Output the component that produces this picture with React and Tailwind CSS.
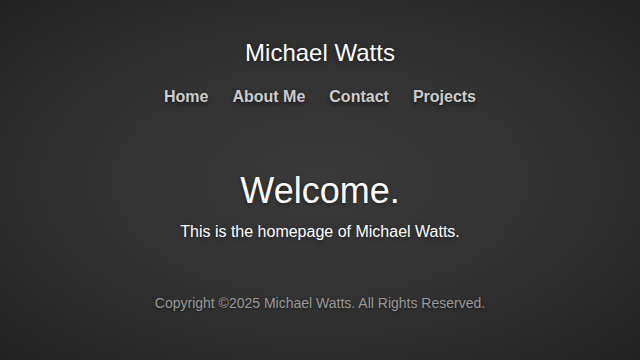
import React from 'react';

const links = ['Home', 'About Me', 'Contact', 'Projects'];

const App = () => {
  return (
    <div
      className="w-full h-[360px] flex flex-col items-center text-center bg-[radial-gradient(ellipse_at_center,#3a3a3a_0%,#333_45%,#222_100%)]"
      style={{ fontFamily: '"Liberation Sans", Arial, sans-serif' }}
    >
      <header className="pt-[38px] flex flex-col items-center">
        <h1 className="text-[24px] leading-[30px] text-white [text-shadow:0_1px_4px_rgba(0,0,0,0.5)]">Michael Watts</h1>
        <nav className="mt-[17px] flex gap-6">
          {links.map((link) => (
            <a
              key={link}
              href="#"
              className="text-[16px] leading-[24px] font-bold text-[#cccccc] [text-shadow:0_2px_4px_rgba(0,0,0,0.6)]"
            >
              {link}
            </a>
          ))}
        </nav>
      </header>

      <main className="mt-[60px] flex flex-col items-center">
        <h2 className="text-[36px] leading-[44px] text-white [text-shadow:0_1px_4px_rgba(0,0,0,0.5)]">Welcome.</h2>
        <p className="mt-[8px] text-[16px] leading-[22px] text-white [text-shadow:0_1px_4px_rgba(0,0,0,0.5)]">
          This is the homepage of Michael Watts.
        </p>
      </main>

      <footer className="mt-[50px] text-[14px] leading-[20px] text-[#999999] [text-shadow:0_1px_3px_rgba(0,0,0,0.5)]">
        Copyright ©2025 Michael Watts. All Rights Reserved.
      </footer>
    </div>
  );
};

export default App;
